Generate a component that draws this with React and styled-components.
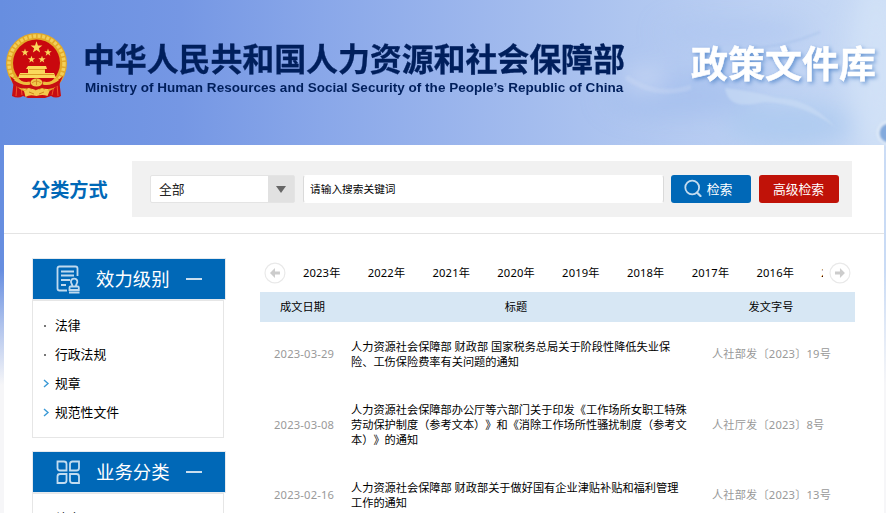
import React, { useState } from "react";
import styled, { createGlobalStyle } from "styled-components";

const GlobalStyle = createGlobalStyle`
  * {
    box-sizing: border-box;
  }

  body {
    margin: 0;
    height: 513px;
    overflow: hidden;
    background: #f6f6f8;
    font-family: "Noto Sans", "Noto Sans CJK SC", sans-serif;
    text-spacing-trim: space-all;
    color: #000;
  }
`;

const Page = styled.div`
  position: relative;
  height: 513px;
  overflow: hidden;
  background: linear-gradient(
      to bottom,
      rgba(246, 246, 248, 0) 270px,
      rgba(246, 246, 248, 0.5) 325px,
      #f6f6f8 385px
    ),
    linear-gradient(
      to right,
      #678ee0 0,
      #7597e4 180px,
      #89a7e9 320px,
      #9db7ed 480px,
      #afc6f0 630px,
      #bdd1f3 760px,
      #c9dbf5 886px
    );
`;

const Scenery = styled.svg`
  position: absolute;
  top: 0;
  left: 0;
`;

const Banner = styled.header`
  position: relative;
  display: flex;
  height: 145px;
  padding: 32px 10px 0 5px;
`;

const BrandText = styled.div`
  padding: 4px 0 0 15px;
  color: #001f5c;
  white-space: nowrap;
`;

const BrandName = styled.h1`
  margin: 0;
  font-family: "Noto Sans CJK SC", sans-serif;
  font-size: 32px;
  font-weight: 700;
  line-height: 43px;
  letter-spacing: -0.13px;
  -webkit-text-stroke: 0.3px #001f5c;
`;

const BrandSub = styled.div`
  padding-left: 2px;
  font-family: "Liberation Sans", sans-serif;
  font-size: 13.5px;
  font-weight: bold;
  line-height: 17px;
  letter-spacing: 0.02px;
`;

const Library = styled.div`
  margin-left: auto;
  padding-top: 3px;
  font-family: "Noto Sans CJK SC", sans-serif;
  font-size: 37px;
  font-weight: 700;
  line-height: 54px;
  white-space: nowrap;
  color: #fff;
  -webkit-text-stroke: 0.5px #fff;
  text-shadow: 2px 2px 4px #5e8fcf;
`;

const Sheet = styled.main`
  position: relative;
  width: 880px;
  height: 368px;
  margin-left: 4px;
  background: #fff;
`;

const SearchRow = styled.div`
  display: flex;
  height: 89px;
  padding: 16px 32px 0 27px;
  border-bottom: 1px solid #e4e4e4;
`;

const SearchTitle = styled.h2`
  width: 101px;
  margin: 0;
  font-size: 19.2px;
  line-height: 58px;
  font-weight: bold;
  color: #0068b7;
`;

const SearchBar = styled.form`
  display: flex;
  flex: 1;
  height: 56px;
  padding: 14px 13px 14px 18px;
  background: #f1f1f1;
`;

const Select = styled.div`
  display: flex;
  width: 145px;
  margin-right: 8px;
  border: 1px solid #e4e4e4;
  border-radius: 2px;
  background: #fff;
  font-size: 12.8px;
  line-height: 26px;
  padding-left: 8px;
  color: #222;
`;

const SelectArrow = styled.span`
  display: flex;
  align-items: center;
  justify-content: center;
  width: 26px;
  margin-left: auto;
  background: #e1e1e1;

  &::after {
    content: "";
    border: 5px solid transparent;
    border-top: 7px solid #666;
    border-bottom: 0;
  }
`;

const SearchInput = styled.input`
  width: 361px;
  margin-right: 7px;
  padding: 0 6px;
  border: 1px solid transparent;
  border-left-color: #dadada;
  border-right-color: #dadada;
  border-radius: 3px;
  background: #fff;
  font: 10.7px "Noto Sans", "Noto Sans CJK SC", sans-serif;
  color: #000;

  &::placeholder {
    color: #000;
  }
`;

const Button = styled.button`
  display: flex;
  align-items: center;
  justify-content: center;
  gap: 5px;
  width: 80px;
  height: 28px;
  margin-right: ${({ $last }) => ($last ? 0 : "8px")};
  padding: 0 ${({ $last }) => ($last ? "1px" : "6px")} 2px 0;
  border: 0;
  border-radius: 3px;
  background: ${({ $color }) => $color};
  font: 12.8px "Noto Sans CJK SC", sans-serif;
  white-space: nowrap;
  color: #fff;
`;

const Columns = styled.div`
  display: flex;
  gap: 35px;
  padding: 24px 0 0 28px;
`;

const Sidebar = styled.aside`
  width: 193px;
`;

const Category = styled.section`
  margin-bottom: 13px;
`;

const CategoryHead = styled.h3`
  display: flex;
  align-items: center;
  width: 194px;
  height: 42px;
  margin: 0;
  padding-left: 23px;
  border: 1px solid #e6eaee;
  background: #0068b7;
  background-clip: padding-box;
  font-size: 18.4px;
  font-weight: normal;
  color: #fff;

  span {
    width: 74px;
    margin-left: 16px;
    line-height: 38px;
    white-space: nowrap;
  }
`;

const Minus = styled.i`
  width: 16px;
  height: 2px;
  margin: 0 0 0 16px;
  background: #c9deef;
`;

const CategoryList = styled.ul`
  width: 192px;
  height: 138px;
  margin: 0;
  padding: 10px 0 0 10px;
  list-style: none;
  border: 1px solid #e6e6e6;
`;

const CategoryItem = styled.li`
  display: flex;
  align-items: center;
  height: 29px;
  font-size: 12.8px;
  line-height: 29px;

  svg {
    flex: none;
  }
`;

const Dot = styled.i`
  width: 2px;
  height: 2px;
  margin: 0 9px 0 1px;
  background: #777;
`;

const Results = styled.section`
  width: 595px;
`;

const YearBar = styled.div`
  display: flex;
  align-items: center;
  height: 34px;
  padding: 0 4px 5px 4px;
`;

const Years = styled.div`
  display: flex;
  width: 522px;
  margin: 0 6px 0 17px;
  overflow: hidden;
`;

const Year = styled.a`
  flex: none;
  width: 64.8px;
  font-size: 11.2px;
  line-height: 20px;
  letter-spacing: 0.15px;
`;

const TableRow = styled.div`
  display: grid;
  grid-template-columns: 91px 338px 1fr;
  align-items: center;
  padding: 16.5px 0;
  font-size: 11.2px;
  line-height: 15px;
`;

const TableHead = styled(TableRow)`
  grid-template-columns: 85px 342px 168px;
  height: 30px;
  padding: 0 0 2px;
  text-align: center;
  background: #d7e7f4;
`;

const Meta = styled.span`
  padding-left: ${({ $indent }) => $indent}px;
  letter-spacing: 0.18px;
  white-space: nowrap;
  color: #999;
`;

const YEARS = [2023, 2022, 2021, 2020, 2019, 2018, 2017, 2016, 2015];

const DOCUMENTS = [
  {
    date: "2023-03-29",
    title:
      "人力资源社会保障部 财政部 国家税务总局关于阶段性降低失业保险、工伤保险费率有关问题的通知",
    number: "人社部发〔2023〕19号"
  },
  {
    date: "2023-03-08",
    title:
      "人力资源社会保障部办公厅等六部门关于印发《工作场所女职工特殊劳动保护制度（参考文本）》和《消除工作场所性骚扰制度（参考文本）》的通知",
    number: "人社厅发〔2023〕8号"
  },
  {
    date: "2023-02-16",
    title:
      "人力资源社会保障部 财政部关于做好国有企业津贴补贴和福利管理工作的通知",
    number: "人社部发〔2023〕13号"
  }
];

const starPoints = (cx, cy, r) =>
  Array.from({ length: 10 }, (_, i) => {
    const radius = i % 2 ? r * 0.4 : r;
    const angle = (Math.PI / 5) * i - Math.PI / 2;
    return `${cx + radius * Math.cos(angle)},${cy + radius * Math.sin(angle)}`;
  }).join(" ");

const Emblem = () => (
  <svg width="63" height="67" viewBox="0 0 63 67">
    <path
      d="M9 47L7 64q6 3 11 0l5 2h17l6-2q5 3 10 0l-2-17z"
      fill="#c80d12"
    />
    <path
      d="M12 52l-1 12M16 54l1 9M49 54l-2 9M52 52l1 12"
      stroke="#f0542c"
      strokeWidth="1"
    />
    <circle cx="31.5" cy="31.5" r="30.5" fill="#e3a928" />
    <circle
      cx="31.5"
      cy="31.5"
      r="27.5"
      fill="none"
      stroke="#f3cf58"
      strokeWidth="3.5"
      strokeDasharray="3 1.5"
    />
    <circle cx="31.5" cy="31" r="23.5" fill="#c9080e" />
    <g fill="#fbd85c">
      <polygon points={starPoints(31.5, 15.5, 6.2)} />
      <polygon points={starPoints(20, 20.5, 3.9)} />
      <polygon points={starPoints(43, 20.5, 3.9)} />
      <polygon points={starPoints(26.5, 27.5, 3.8)} />
      <polygon points={starPoints(37, 27.5, 3.8)} />
      <path d="M23 34h18l1 3h-2v4h9l2 5H13l2-5h8v-4h-2z" />
    </g>
    <path d="M15 42.5h34M24 37.5h16" stroke="#dc9b26" />
    <path
      d="M5 44q10 9 19 7l7-3 7 3q11 2 20-7l-4 9q-9 6-17 3l-6 2-7-2q-9 2-16-4z"
      fill="#c70e12"
    />
    <path
      d="M10 47q8 6 15 4M53 47q-8 6-15 4"
      fill="none"
      stroke="#eebc3d"
      strokeWidth="3"
    />
    <ellipse cx="31.5" cy="50.5" rx="6" ry="4" fill="#f0c648" />
    <path
      d="M27 51q4-4 9 0M31.500 47v6"
      fill="none"
      stroke="#cf821c"
      strokeWidth="0.8"
    />
    <path
      d="M19 59q7-3 12.500 0 6-3 13 0l-2 5q-5-2-11 0-7-2-11 1z"
      fill="#f3ca4d"
    />
    <path d="M24 60l5 2M39 60l-5 2" stroke="#cf821c" />
  </svg>
);

const BannerScenery = () => (
  <Scenery width="886" height="160" viewBox="0 0 886 160">
    <defs>
      <filter id="soft" x="-50%" y="-50%" width="200%" height="200%">
        <feGaussianBlur stdDeviation="12" />
      </filter>
      <filter id="edge">
        <feGaussianBlur stdDeviation="1" />
      </filter>
    </defs>
    <g filter="url(#soft)">
      <ellipse cx="680" cy="96" rx="75" ry="22" fill="#a0bdec" opacity=".6" />
      <ellipse cx="790" cy="125" rx="65" ry="22" fill="#abc9ef" opacity=".8" />
      <ellipse cx="735" cy="32" rx="75" ry="13" fill="#abc5f0" opacity=".6" />
      <ellipse cx="876" cy="66" rx="26" ry="90" fill="#d7e6f9" opacity=".6" />
      <ellipse cx="645" cy="80" rx="20" ry="7" fill="#d3dff6" />
    </g>
    <g filter="url(#edge)">
      <path
        d="M725 88q28 3 52 10c28 1 43 13 59 30-20-16-45-25-71-26-24 5-37 4-40-14z"
        fill="#cadcf5"
        opacity=".65"
      />
      <path
        d="M626 77q30 22 65 10"
        fill="none"
        stroke="#d2dff6"
        strokeWidth="5"
        opacity=".3"
      />
      <path
        d="M748 47q33 2 72-15"
        fill="none"
        stroke="#94b4e4"
        opacity=".6"
      />
      <circle
        cx="889"
        cy="133"
        r="11"
        fill="#83aadd"
        stroke="#dce8f7"
        strokeWidth="3"
      />
    </g>
  </Scenery>
);

const SearchIcon = () => (
  <svg width="18" height="18" viewBox="0 0 18 18" fill="none">
    <circle cx="8.2" cy="8.5" r="6.900" stroke="#c4dcef" strokeWidth="1.800" />
    <path
      d="M13 13.500l3.500 3.500"
      stroke="#c4dcef"
      strokeWidth="2.200"
      strokeLinecap="round"
    />
  </svg>
);

const LevelIcon = () => (
  <svg
    width="24"
    height="29"
    viewBox="0 0 24 29"
    fill="none"
    stroke="#bfdaef"
    strokeWidth="1.800"
  >
    <path d="M11 25.500H3.500q-2 0-2-2v-20q0-2 2-2h16q2 0 2 2V11" />
    <path d="M5 6.500h13M5 10.500h13M5 15h9M5 20h5" />
    <path d="M16.300 21.500c.5-2.500-1.800-3-1.300-5.500.7-3.300 5.600-3.300 6.300 0 .5 2.500-1.800 3-1.300 5.500M13.500 25v-2.500q0-1 1-1h7.300q1 0 1 1V25zM13 27.500h10.500" />
  </svg>
);

const GridIcon = () => (
  <svg
    width="24"
    height="24"
    viewBox="0 0 24 24"
    fill="none"
    stroke="#c2dcf0"
    strokeWidth="1.800"
  >
    <path d="M1.500 1.500H8Q10.500 1.500 10.500 4v6.500H4Q1.500 10.500 1.500 8zM14 10.500V4q0-2.500 2.500-2.500h6.500V8q0 2.500-2.500 2.500zM1.500 23v-6.500Q1.500 14 4 14h6.500v6.500q0 2.500-2.500 2.500zM14 14h6.500q2.500 0 2.500 2.500V23h-6.500Q14 23 14 20.500z" />
  </svg>
);

const Chevron = () => (
  <svg width="12" height="9" viewBox="0 0 12 9" fill="none">
    <path d="M1 1l4 3.500L1 8" stroke="#3b9ad6" strokeWidth="1.400" />
  </svg>
);

const RoundArrow = ({ next }) => (
  <svg width="22" height="22" viewBox="0 0 22 22">
    <circle
      cx="11"
      cy="11"
      r="10"
      fill="#fff"
      stroke="#e9e9e9"
      strokeWidth="1.200"
    />
    <path
      d="M6 11l5-5v3.500h5v3h-5V16z"
      fill="#ccc"
      transform={next ? "rotate(180 11 11)" : undefined}
    />
  </svg>
);

const CategoryBox = ({ icon, title, items }) => (
  <Category>
    <CategoryHead>
      {icon}
      <span>{title}</span>
      <Minus />
    </CategoryHead>
    <CategoryList>
      {items.map(item => (
        <CategoryItem key={item.text}>
          {item.nested ? <Chevron /> : <Dot />}
          {item.text}
        </CategoryItem>
      ))}
    </CategoryList>
  </Category>
);

export default function App() {
  const [keyword, setKeyword] = useState("");

  return (
    <Page>
      <GlobalStyle />
      <BannerScenery />
      <Banner>
        <Emblem />
        <BrandText>
          <BrandName>中华人民共和国人力资源和社会保障部</BrandName>
          <BrandSub>
            Ministry of Human Resources and Social Security of the People’s
            Republic of China
          </BrandSub>
        </BrandText>
        <Library>政策文件库</Library>
      </Banner>
      <Sheet>
        <SearchRow>
          <SearchTitle>分类方式</SearchTitle>
          <SearchBar onSubmit={event => event.preventDefault()}>
            <Select>
              全部
              <SelectArrow />
            </Select>
            <SearchInput
              placeholder="请输入搜索关键词"
              value={keyword}
              onChange={event => setKeyword(event.target.value)}
            />
            <Button type="submit" $color="#0068b7">
              <SearchIcon />
              检索
            </Button>
            <Button type="button" $color="#c01208" $last>
              高级检索
            </Button>
          </SearchBar>
        </SearchRow>
        <Columns>
          <Sidebar>
            <CategoryBox
              icon={<LevelIcon />}
              title="效力级别"
              items={[
                { text: "法律" },
                { text: "行政法规" },
                { text: "规章", nested: true },
                { text: "规范性文件", nested: true }
              ]}
            />
            <CategoryBox
              icon={<GridIcon />}
              title="业务分类"
              items={[{ text: "综合" }]}
            />
          </Sidebar>
          <Results>
            <YearBar>
              <RoundArrow />
              <Years>
                {YEARS.map(year => (
                  <Year key={year}>{year}年</Year>
                ))}
              </Years>
              <RoundArrow next />
            </YearBar>
            <TableHead>
              <span>成文日期</span>
              <span>标题</span>
              <span>发文字号</span>
            </TableHead>
            {DOCUMENTS.map(doc => (
              <TableRow key={doc.number}>
                <Meta $indent={14}>{doc.date}</Meta>
                <span>{doc.title}</span>
                <Meta $indent={23}>{doc.number}</Meta>
              </TableRow>
            ))}
          </Results>
        </Columns>
      </Sheet>
    </Page>
  );
}
